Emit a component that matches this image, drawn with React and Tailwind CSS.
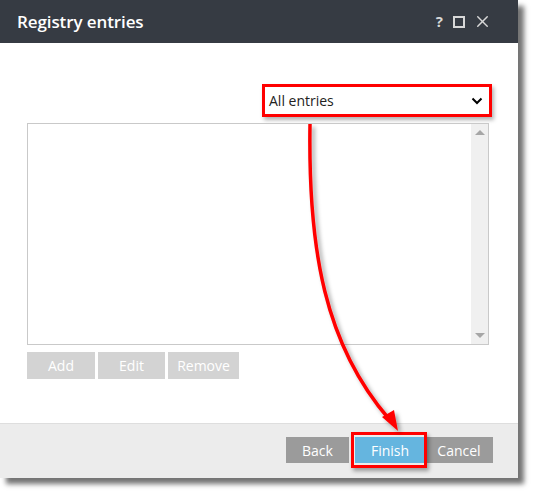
import { X } from 'lucide-react';

const font = { fontFamily: '"Open Sans", "Noto Sans", sans-serif' };

function ChevronDown() {
  return (
    <svg width="12" height="8" viewBox="0 0 12 8" className="text-black">
      <path d="M1.5 1.5 L6 6 L10.5 1.5" fill="none" stroke="currentColor" strokeWidth="2" />
    </svg>
  );
}

function Arrow() {
  return (
    <svg className="absolute inset-0 pointer-events-none" width="533" height="493" viewBox="0 0 533 493">
      <defs>
        <filter id="sh" x="-20%" y="-20%" width="140%" height="140%">
          <feDropShadow dx="3" dy="3" stdDeviation="2" floodColor="#000" floodOpacity="0.35" />
        </filter>
      </defs>
      <g filter="url(#sh)">
        <path d="M310 124 C 308 250, 325 345, 389 419" fill="none" stroke="#ff0000" strokeWidth="3.5" />
        <path d="M382 417 L398 431 L394 410 Z" fill="#ff0000" />
      </g>
    </svg>
  );
}

export default function App() {
  return (
    <div className="relative w-[533px] h-[493px] bg-white overflow-hidden" style={font}>
      <div className="w-[518px] h-[478px] flex flex-col bg-white shadow-[6px_6px_5px_rgba(0,0,0,0.55)]">
        <div className="h-[43px] bg-[#363b43] flex items-center justify-between pl-[17px] pr-[26px] shrink-0">
          <h1 className="text-white text-[17px] font-semibold tracking-[-0.1px]">Registry entries</h1>
          <div className="flex items-center gap-[7px] text-[#d8d8d8]">
            <span className="text-[15px] font-bold leading-none mr-[3px]">?</span>
            <span className="w-[12px] h-[12px] border-2 border-[#d8d8d8]" />
            <X size={19} strokeWidth={1.8} className="ml-[1px]" />
          </div>
        </div>

        <div className="flex-1 flex flex-col pl-[27px] pr-[29px]">
          <div className="flex justify-end mt-[41px] -mr-[3px]">
            <div className="border-[3px] border-[#ff0000] p-px shadow-[2px_3px_4px_rgba(0,0,0,0.3)]">
              <div className="w-[222px] h-[25px] bg-white flex items-center justify-between pl-[3px] pr-[5px] text-[14px] text-[#222]">
                <span>All entries</span>
                <ChevronDown />
              </div>
            </div>
          </div>

          <div className="mt-[6px] h-[222px] border border-[#c9c9c9] flex justify-end">
            <div className="w-[17px] bg-[#f0f0f0] flex flex-col justify-between items-center py-[6px]">
              <span className="w-0 h-0 border-x-[5px] border-x-transparent border-b-[5px] border-b-[#a6a6a6]" />
              <span className="w-0 h-0 border-x-[5px] border-x-transparent border-t-[5px] border-t-[#a6a6a6]" />
            </div>
          </div>

          <div className="flex gap-[3px] mt-[7px] text-white text-[14px]">
            <button className="w-[68px] h-[27px] bg-[#d3d3d3]">Add</button>
            <button className="w-[67px] h-[27px] bg-[#d3d3d3]">Edit</button>
            <button className="w-[71px] h-[27px] bg-[#d3d3d3]">Remove</button>
          </div>
        </div>

        <div className="h-[55px] shrink-0 bg-[#ececec] border-t border-[#dedede] flex justify-end items-start pt-[13px] pr-[25px] text-white text-[14px]">
          <button className="w-[63px] h-[26px] bg-[#9b9b9b]">Back</button>
          <div className="relative ml-[6px]">
            <button className="w-[70px] h-[26px] bg-[#65b5df]">Finish</button>
            <span className="absolute -left-[4px] -right-[2px] -top-[5px] -bottom-[5px] border-[3px] border-[#ff0000] shadow-[2px_3px_4px_rgba(0,0,0,0.35)] pointer-events-none" />
          </div>
          <button className="w-[68px] h-[26px] bg-[#9b9b9b]">Cancel</button>
        </div>
      </div>
      <Arrow />
    </div>
  );
}
